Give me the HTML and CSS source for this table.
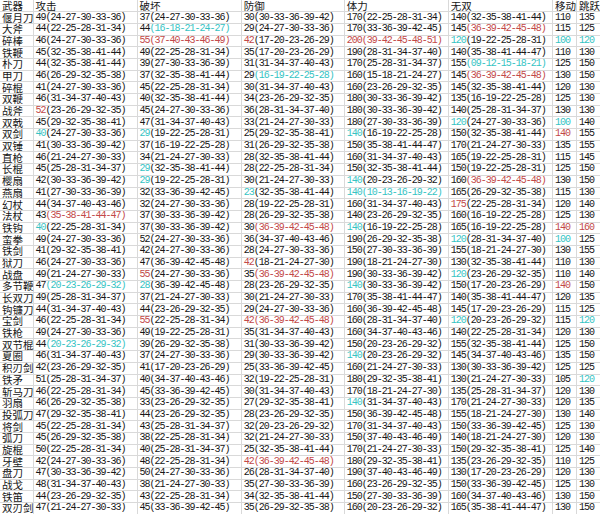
FILE: index.html
```html
<!DOCTYPE html>
<html lang="zh-CN">
<head>
<meta charset="utf-8">
<title>武器属性表</title>
<link rel="stylesheet" href="styles.css">
</head>
<body>
<table class="sheet">
<colgroup><col class="w-name"><col class="w-stat"><col class="w-stat"><col class="w-def"><col class="w-stat"><col class="w-stat"><col class="w-small"><col class="w-last"></colgroup>
<thead>
<tr><th>武器</th><th>攻击</th><th>破坏</th><th>防御</th><th>体力</th><th>无双</th><th>移动</th><th>跳跃</th></tr>
</thead>
<tbody>
<tr><td class="n">偃月刀</td><td>49(24-27-30-33-36)</td><td>37(24-27-30-33-36)</td><td>30(30-33-36-39-42)</td><td>170(22-25-28-31-34)</td><td>140(32-35-38-41-44)</td><td>110</td><td>135</td></tr>
<tr><td class="n">大斧</td><td>44(22-25-28-31-34)</td><td>44<span class="c">(16-18-21-24-27)</span></td><td>29(24-27-30-33-36)</td><td>170(33-36-39-42-45)</td><td>145<span class="r">(36-39-42-45-48)</span></td><td>115</td><td>125</td></tr>
<tr><td class="n">碎棒</td><td>46(24-27-30-33-36)</td><td class="r">55(37-40-43-46-49)</td><td><span class="r">42</span>(17-20-23-26-29)</td><td class="r">200(39-42-45-48-51)</td><td><span class="c">120</span>(19-22-25-28-31)</td><td class="c">100</td><td class="c">120</td></tr>
<tr><td class="n">铁鞭</td><td>45(32-35-38-41-44)</td><td>49(22-25-28-31-34)</td><td>35(17-20-23-26-29)</td><td>190(28-31-34-37-40)</td><td>140(35-38-41-44-47)</td><td>110</td><td>130</td></tr>
<tr><td class="n">朴刀</td><td>44(32-35-38-41-44)</td><td>39(27-30-33-36-39)</td><td>31(31-34-37-40-43)</td><td>170(25-28-31-34-37)</td><td>155<span class="c">(09-12-15-18-21)</span></td><td>125</td><td>150</td></tr>
<tr><td class="n">甲刀</td><td>46(26-29-32-35-38)</td><td>37(32-35-38-41-44)</td><td>29<span class="c">(16-19-22-25-28)</span></td><td>160(15-18-21-24-27)</td><td>145<span class="r">(36-39-42-45-48)</span></td><td>130</td><td>150</td></tr>
<tr><td class="n">碎棍</td><td>41(24-27-30-33-36)</td><td>45(22-25-28-31-34)</td><td>30(31-34-37-40-43)</td><td>160(23-26-29-32-35)</td><td>145(32-35-38-41-44)</td><td>120</td><td>130</td></tr>
<tr><td class="n">双鞭</td><td>46(31-34-37-40-43)</td><td>40(32-35-38-41-44)</td><td>34(23-26-29-32-35)</td><td>180(30-33-36-39-42)</td><td>135(16-19-22-25-28)</td><td>125</td><td>130</td></tr>
<tr><td class="n">战斧</td><td><span class="r">52</span>(23-26-29-32-35)</td><td>45(24-27-30-33-36)</td><td>36(28-31-34-37-40)</td><td>180(30-33-36-39-42)</td><td>140(25-28-31-34-37)</td><td>130</td><td>130</td></tr>
<tr><td class="n">双戟</td><td>45(29-32-35-38-41)</td><td>47(31-34-37-40-43)</td><td>33(21-24-27-30-33)</td><td>180(27-30-33-36-39)</td><td><span class="c">120</span>(24-27-30-33-36)</td><td class="c">100</td><td>140</td></tr>
<tr><td class="n">双剑</td><td><span class="c">40</span>(24-27-30-33-36)</td><td><span class="c">29</span>(19-22-25-28-31)</td><td>25(29-32-35-38-41)</td><td><span class="c">140</span>(16-19-22-25-28)</td><td>150(32-35-38-41-44)</td><td class="r">140</td><td>155</td></tr>
<tr><td class="n">双锤</td><td>41(30-33-36-39-42)</td><td>37(16-19-22-25-28)</td><td>31(26-29-32-35-38)</td><td>150(35-38-41-44-47)</td><td>170(21-24-27-30-33)</td><td>135</td><td>155</td></tr>
<tr><td class="n">直枪</td><td>46(21-24-27-30-33)</td><td>34(21-24-27-30-33)</td><td>28(32-35-38-41-44)</td><td>160(31-34-37-40-43)</td><td>165(19-22-25-28-31)</td><td>115</td><td>145</td></tr>
<tr><td class="n">长棍</td><td>45(25-28-31-34-37)</td><td><span class="c">29</span>(32-35-38-41-44)</td><td>28(22-25-28-31-34)</td><td>150(32-35-38-41-44)</td><td>150(19-22-25-28-31)</td><td>125</td><td>150</td></tr>
<tr><td class="n">樱扇</td><td>42(30-33-36-39-42)</td><td><span class="c">29</span>(19-22-25-28-31)</td><td>30(21-24-27-30-33)</td><td><span class="c">140</span>(20-23-26-29-32)</td><td>160<span class="r">(36-39-42-45-48)</span></td><td>130</td><td>150</td></tr>
<tr><td class="n">燕扇</td><td>41(27-30-33-36-39)</td><td>32(33-36-39-42-45)</td><td><span class="c">23</span>(32-35-38-41-44)</td><td class="c">140(10-13-16-19-22)</td><td>165(26-29-32-35-38)</td><td>115</td><td>130</td></tr>
<tr><td class="n">幻杖</td><td>44(34-37-40-43-46)</td><td>32(24-27-30-33-36)</td><td>28(19-22-25-28-31)</td><td>160(31-34-37-40-43)</td><td><span class="r">175</span>(22-25-28-31-34)</td><td>120</td><td>140</td></tr>
<tr><td class="n">法杖</td><td>43<span class="r">(35-38-41-44-47)</span></td><td>37(30-33-36-39-42)</td><td>28(26-29-32-35-38)</td><td>140(23-26-29-32-35)</td><td>160(16-19-22-25-28)</td><td>125</td><td>130</td></tr>
<tr><td class="n">铁钩</td><td><span class="c">40</span>(22-25-28-31-34)</td><td>37(30-33-36-39-42)</td><td>30<span class="r">(36-39-42-45-48)</span></td><td><span class="c">140</span>(16-19-22-25-28)</td><td>165(16-19-22-25-28)</td><td class="r">140</td><td class="r">160</td></tr>
<tr><td class="n">蛮拳</td><td>49(24-27-30-33-36)</td><td>52(24-27-30-33-36)</td><td>36(34-37-40-43-46)</td><td>190(26-29-32-35-38)</td><td><span class="c">120</span>(28-31-34-37-40)</td><td class="c">100</td><td>125</td></tr>
<tr><td class="n">铁剑</td><td>41(29-32-35-38-41)</td><td>42(24-27-30-33-36)</td><td>28(24-27-30-33-36)</td><td>150(27-30-33-36-39)</td><td>155(18-21-24-27-30)</td><td>130</td><td>155</td></tr>
<tr><td class="n">狱刀</td><td>46(24-27-30-33-36)</td><td>47(36-39-42-45-48)</td><td><span class="r">42</span>(18-21-24-27-30)</td><td>190(18-21-24-27-30)</td><td>130(32-35-38-41-44)</td><td>110</td><td>130</td></tr>
<tr><td class="n">战盘</td><td>49(21-24-27-30-33)</td><td><span class="r">55</span>(24-27-30-33-36)</td><td>35<span class="r">(36-39-42-45-48)</span></td><td>190(30-33-36-39-42)</td><td><span class="c">120</span>(23-26-29-32-35)</td><td>110</td><td>140</td></tr>
<tr><td class="n">多节鞭</td><td>47<span class="c">(20-23-26-29-32)</span></td><td><span class="c">28</span>(36-39-42-45-48)</td><td>28(23-26-29-32-35)</td><td><span class="c">140</span>(30-33-36-39-42)</td><td>150(17-20-23-26-29)</td><td class="r">140</td><td>150</td></tr>
<tr><td class="n">长双刀</td><td>49(25-28-31-34-37)</td><td>37(21-24-27-30-33)</td><td>30(21-24-27-30-33)</td><td>170(35-38-41-44-47)</td><td>140(35-38-41-44-47)</td><td>120</td><td>135</td></tr>
<tr><td class="n">钩镰刀</td><td>44(31-34-37-40-43)</td><td>44(23-26-29-32-35)</td><td>29(24-27-30-33-36)</td><td>160(36-39-42-45-48)</td><td>145(17-20-23-26-29)</td><td>115</td><td>125</td></tr>
<tr><td class="n">宝剑</td><td>46(22-25-28-31-34)</td><td><span class="r">55</span>(22-25-28-31-34)</td><td class="r">42(36-39-42-45-48)</td><td>160(28-31-34-37-40)</td><td><span class="c">120</span>(20-23-26-29-32)</td><td>115</td><td class="c">120</td></tr>
<tr><td class="n">铁枪</td><td>49(24-27-30-33-36)</td><td>49(19-22-25-28-31)</td><td>35(31-34-37-40-43)</td><td>160(34-37-40-43-46)</td><td>140(22-25-28-31-34)</td><td>120</td><td>130</td></tr>
<tr><td class="n">双节棍</td><td>44<span class="c">(20-23-26-29-32)</span></td><td>39(26-29-32-35-38)</td><td>31(30-33-36-39-42)</td><td>150(20-23-26-29-32)</td><td>155(32-35-38-41-44)</td><td>125</td><td>150</td></tr>
<tr><td class="n">夏圈</td><td>46(31-34-37-40-43)</td><td>37(24-27-30-33-36)</td><td>29(30-33-36-39-42)</td><td><span class="c">140</span>(20-23-26-29-32)</td><td>145(34-37-40-43-46)</td><td>135</td><td>150</td></tr>
<tr><td class="n">积刃剑</td><td>42(23-26-29-32-35)</td><td>41(17-20-23-26-29)</td><td>25(33-36-39-42-45)</td><td>160(21-24-27-30-33)</td><td>130(30-33-36-39-42)</td><td>125</td><td>125</td></tr>
<tr><td class="n">铁矛</td><td>51(25-28-31-34-37)</td><td>40(34-37-40-43-46)</td><td>32(19-22-25-28-31)</td><td>180(29-32-35-38-41)</td><td>130(21-24-27-30-33)</td><td>105</td><td class="c">120</td></tr>
<tr><td class="n">斩马刀</td><td>46(22-25-28-31-34)</td><td>45(33-36-39-42-45)</td><td>30(31-34-37-40-43)</td><td>170(18-21-24-27-30)</td><td>135(25-28-31-34-37)</td><td>120</td><td>130</td></tr>
<tr><td class="n">羽扇</td><td>46(26-29-32-35-38)</td><td>33(23-26-29-32-35)</td><td>27(29-32-35-38-41)</td><td><span class="c">140</span>(31-34-37-40-43)</td><td>170(21-24-27-30-33)</td><td>120</td><td>135</td></tr>
<tr><td class="n">投弧刀</td><td>47(29-32-35-38-41)</td><td>44(23-26-29-32-35)</td><td>28(23-26-29-32-35)</td><td>150(36-39-42-45-48)</td><td>155(18-21-24-27-30)</td><td>130</td><td>140</td></tr>
<tr><td class="n">将剑</td><td>45(22-25-28-31-34)</td><td>43(25-28-31-34-37)</td><td>32(20-23-26-29-32)</td><td>170(31-34-37-40-43)</td><td>150(33-36-39-42-45)</td><td>125</td><td>130</td></tr>
<tr><td class="n">弧刀</td><td>45(26-29-32-35-38)</td><td>38(22-25-28-31-34)</td><td>32(21-24-27-30-33)</td><td>150(37-40-43-46-49)</td><td>140(18-21-24-27-30)</td><td>120</td><td>130</td></tr>
<tr><td class="n">旋棍</td><td>50(22-25-28-31-34)</td><td>40(25-28-31-34-37)</td><td>25(32-35-38-41-44)</td><td>170(21-24-27-30-33)</td><td>150(29-32-35-38-41)</td><td>125</td><td>140</td></tr>
<tr><td class="n">牙壁</td><td>42(24-27-30-33-36)</td><td>48(22-25-28-31-34)</td><td class="r">42(36-39-42-45-48)</td><td>180(29-32-35-38-41)</td><td>135(23-26-29-32-35)</td><td>110</td><td>125</td></tr>
<tr><td class="n">盘刀</td><td>47(30-33-36-39-42)</td><td>50(24-27-30-33-36)</td><td>26(28-31-34-37-40)</td><td>190(37-40-43-46-49)</td><td>130(17-20-23-26-29)</td><td>120</td><td>130</td></tr>
<tr><td class="n">战戈</td><td>48(31-34-37-40-43)</td><td>38(21-24-27-30-33)</td><td>35(27-30-33-36-39)</td><td>160(23-26-29-32-35)</td><td>150(33-36-39-42-45)</td><td>125</td><td>130</td></tr>
<tr><td class="n">铁笛</td><td>44(23-26-29-32-35)</td><td>43(22-25-28-31-34)</td><td>34(32-35-38-41-44)</td><td>150(27-30-33-36-39)</td><td>160(34-37-40-43-46)</td><td>130</td><td>150</td></tr>
<tr><td class="n">双刃剑</td><td>47(21-24-27-30-33)</td><td>45(33-36-39-42-45)</td><td>35(26-29-32-35-38)</td><td>160(20-23-26-29-32)</td><td>165(35-38-41-44-47)</td><td>130</td><td>150</td></tr>
</tbody>
</table>
</body>
</html>
```

FILE: styles.css
```css
html, body {
  margin: 0;
  padding: 0;
  background: #ffffff;
  overflow: hidden;
}

.sheet {
  border-collapse: collapse;
  table-layout: fixed;
  width: 607px;
  color: #161616;
  font-family: "Liberation Mono", "DejaVu Sans Mono", monospace;
  font-size: 10px;
  letter-spacing: -1px;
}

.w-name { width: 33px; }
.w-stat { width: 104px; }
.w-def { width: 103px; }
.w-small { width: 24px; }
.w-last { width: 30px; }

.sheet tr {
  height: 11.7px;
}

.sheet th,
.sheet td {
  border: 1px solid #d9d9d9;
  padding: 0 0 0 2px;
  line-height: 10px;
  white-space: nowrap;
  overflow: hidden;
  vertical-align: middle;
  text-align: left;
  font-weight: normal;
}

.sheet thead th {
  border-top: none;
}

.sheet th:first-child,
.sheet td:first-child {
  border-left: none;
}

.sheet th,
.sheet td.n {
  font-family: "Noto Sans CJK SC", "Noto Sans", sans-serif;
  font-size: 10.5px;
  letter-spacing: 0;
  overflow: visible;
}

.r { color: #c24848; }
.c { color: #36c4c4; }
```
